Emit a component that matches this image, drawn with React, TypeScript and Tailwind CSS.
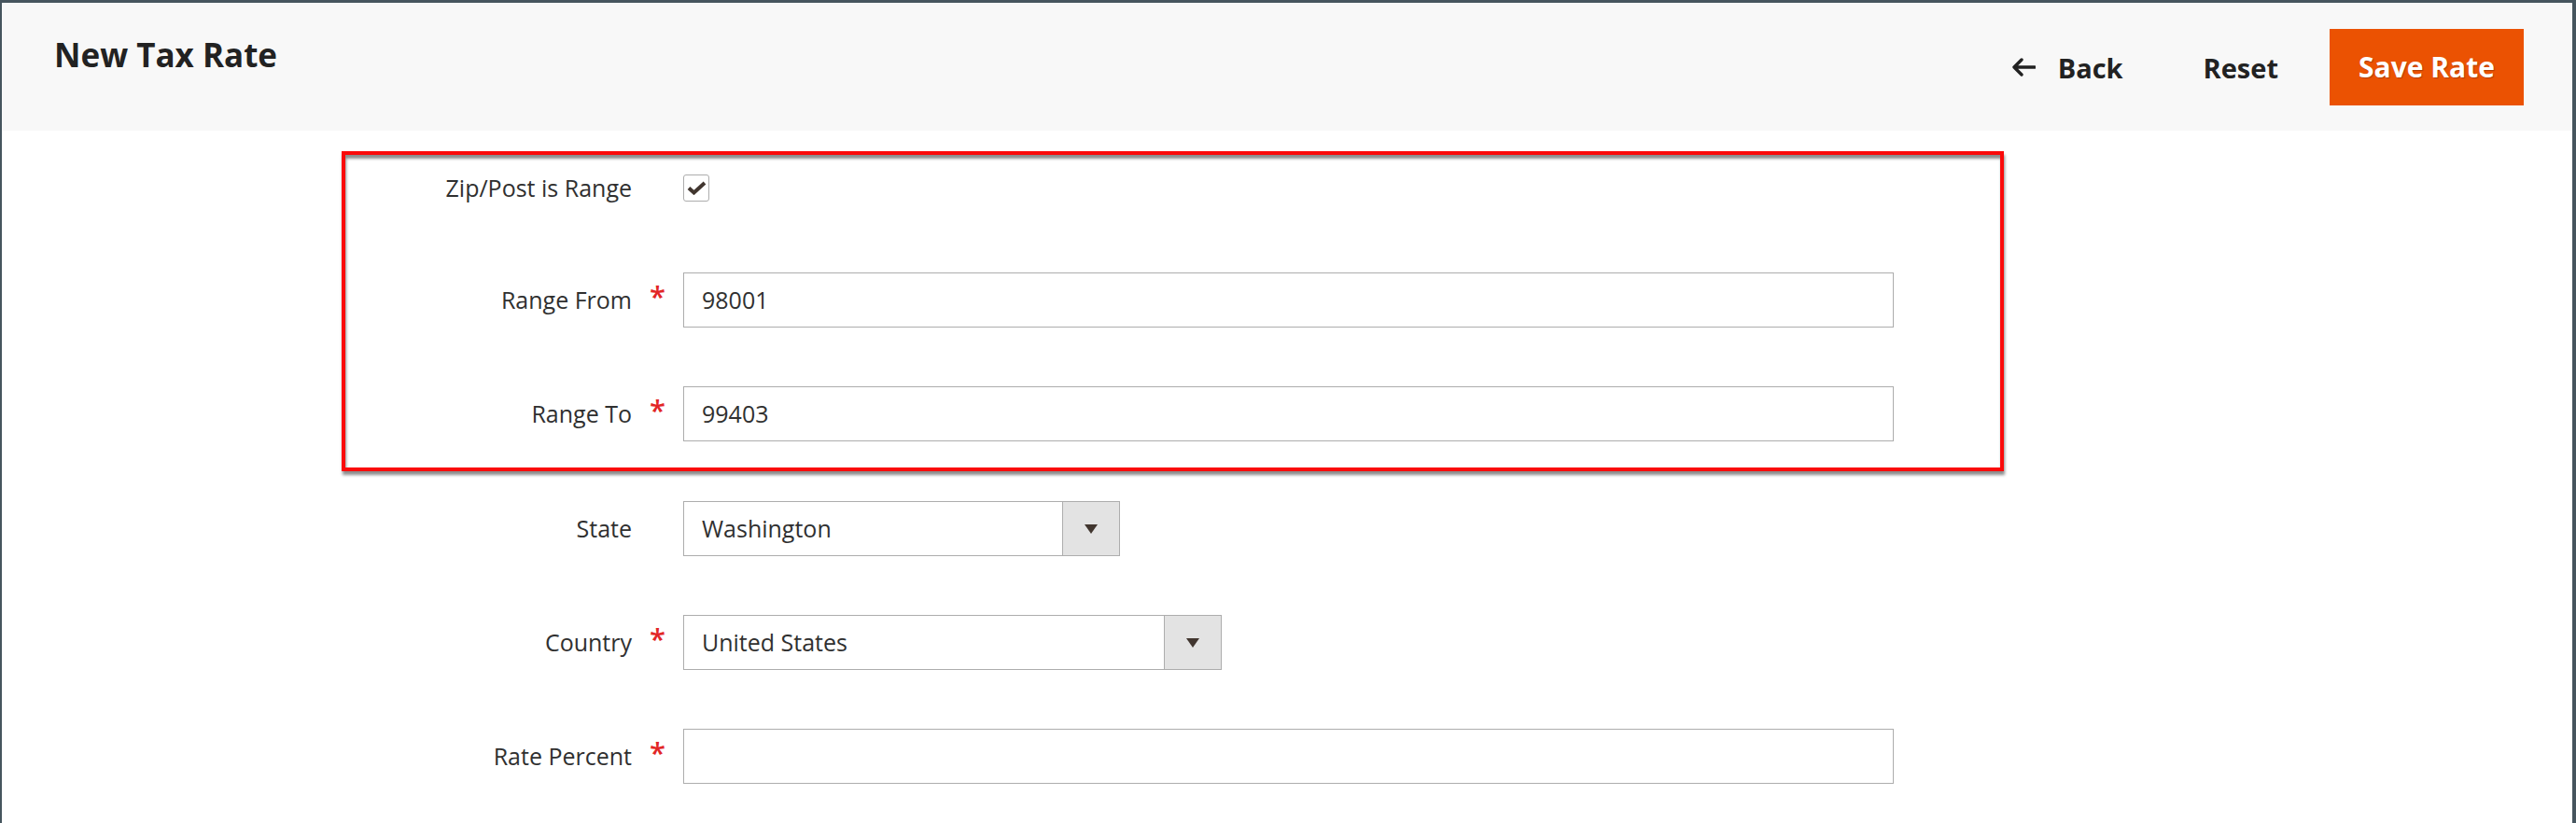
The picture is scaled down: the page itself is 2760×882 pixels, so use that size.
import React from "react";

const Asterisk = () => (
  <span className="text-[31px] leading-none text-[#e22626] font-['Open_Sans',sans-serif] font-semibold -mt-[8px]">*</span>
);

function Row({
  labelW,
  label,
  required,
  children,
}: {
  labelW: string;
  label: string;
  required?: boolean;
  children: React.ReactNode;
}) {
  return (
    <div className="flex items-center">
      <div className={`${labelW} text-right text-[25px] text-[#303030] leading-none`}>{label}</div>
      <div className="w-[55px] pl-[19px] flex items-center h-[59px]">{required ? <Asterisk /> : null}</div>
      {children}
    </div>
  );
}

function TextInput({ value, w }: { value?: string; w: string }) {
  return (
    <div className={`${w} h-[59px] border border-[#adadad] bg-white flex items-center pl-[19px] text-[25px] text-[#303030]`}>
      {value}
    </div>
  );
}

function Select({ value, w }: { value: string; w: string }) {
  return (
    <div className={`${w} h-[59px] border border-[#adadad] bg-white flex`}>
      <div className="flex-1 flex items-center pl-[19px] text-[25px] text-[#303030]">{value}</div>
      <div className="w-[61px] border-l border-[#adadad] bg-[#e3e3e3] flex items-center justify-center">
        <svg width="14" height="10" viewBox="0 0 14 10">
          <path d="M0 0 H14 L7 10 Z" fill="#41362f" />
        </svg>
      </div>
    </div>
  );
}

export default function App() {
  return (
    <div className="w-[2760px] h-[882px] overflow-hidden bg-white border-t-[3px] border-l-[2px] border-r-[4px] border-[#46555e] font-['Open_Sans',sans-serif] text-[#303030]">
      {/* Header */}
      <div className="h-[137px] bg-[#f8f8f8] flex items-start justify-between pl-[56px] pr-[52px]">
        <h1 className="pt-[38px] text-[35px] leading-none font-bold text-[#222222]">New Tax Rate</h1>
        <div className="flex items-center mt-[28px] h-[82px]">
          <button className="flex items-center text-[29px] font-bold text-[#222222] leading-none">
            <svg width="26" height="20" viewBox="0 0 26 20" className="mr-[24px]">
              <path d="M25 10 H3 M11 2 L3 10 L11 18" stroke="#222222" strokeWidth="3.4" fill="none" strokeLinecap="round" strokeLinejoin="round" />
            </svg>
            Back
          </button>
          <button className="ml-[86px] text-[29px] font-bold text-[#222222] leading-none">Reset</button>
          <button className="ml-[55px] h-[82px] w-[208px] bg-[#eb5202] text-white text-[30px] font-bold leading-none [text-shadow:1px_1px_1px_rgba(0,0,0,0.25)]">
            Save Rate
          </button>
        </div>
      </div>

      {/* Form */}
      <div className="flex flex-col">
        <div className="mt-[22px] ml-[364px] w-[1781px] border-[4px] border-[#fa0a0a] shadow-[1px_4px_3px_rgba(0,0,0,0.45),inset_1px_4px_3px_rgba(0,0,0,0.45)] pt-[21px] pb-[28px] flex flex-col">
          <div className="flex items-center h-[29px]">
            <div className="w-[307px] text-right text-[25px] text-[#303030] leading-none">Zip/Post is Range</div>
            <div className="w-[55px]" />
            <div className="w-[28px] h-[29px] border border-[#adadad] rounded-[3px] bg-white flex items-center justify-center">
              <svg width="21" height="15" viewBox="0 0 21 15">
                <path d="M2 7.5 L7.5 12.5 L19 2" stroke="#41362f" strokeWidth="4" fill="none" strokeLinejoin="miter" />
              </svg>
            </div>
          </div>
          <div className="mt-[76px]">
            <Row labelW="w-[307px]" label="Range From" required>
              <TextInput value="98001" w="w-[1297px]" />
            </Row>
          </div>
          <div className="mt-[63px]">
            <Row labelW="w-[307px]" label="Range To" required>
              <TextInput value="99403" w="w-[1297px]" />
            </Row>
          </div>
        </div>

        <div className="mt-[32px]">
          <Row labelW="w-[675px]" label="State">
            <Select value="Washington" w="w-[468px]" />
          </Row>
        </div>
        <div className="mt-[63px]">
          <Row labelW="w-[675px]" label="Country" required>
            <Select value="United States" w="w-[577px]" />
          </Row>
        </div>
        <div className="mt-[63px]">
          <Row labelW="w-[675px]" label="Rate Percent" required>
            <TextInput w="w-[1297px]" />
          </Row>
        </div>
      </div>
    </div>
  );
}
